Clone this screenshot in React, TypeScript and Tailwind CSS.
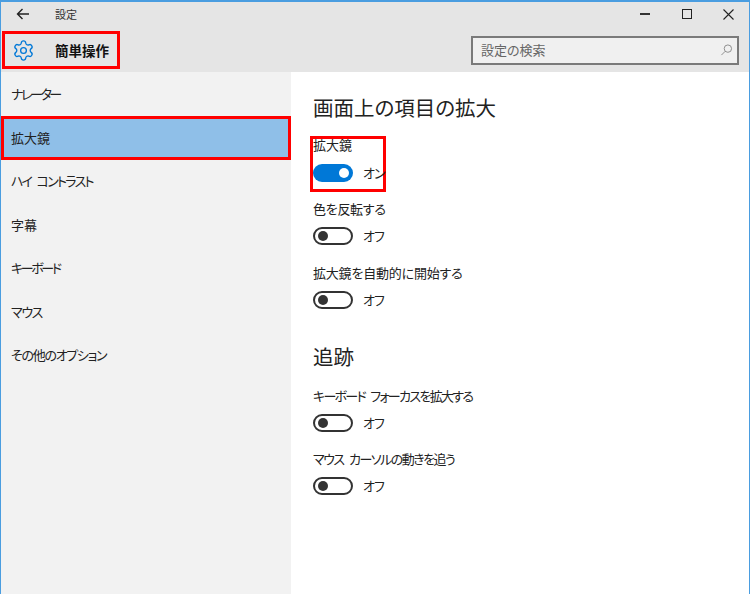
import { Settings } from "lucide-react";

const font = { fontFamily: '"Noto Sans CJK JP", "Noto Sans", sans-serif' };

const navItems = [
  { label: "ナレーター", tracking: "tracking-[-2.4px]" },
  { label: "拡大鏡", tracking: "", active: true },
  { label: "ハイ コントラスト", tracking: "tracking-[-1.7px] [word-spacing:4px]" },
  { label: "字幕", tracking: "" },
  { label: "キーボード", tracking: "tracking-[-2.4px]" },
  { label: "マウス", tracking: "tracking-[-1.3px]" },
  { label: "その他のオプション", tracking: "tracking-[-1.3px]" },
];

function Toggle({ on, className = "" }: { on?: boolean; className?: string }) {
  return (
    <div className={`flex items-center gap-[10px] ${className}`}>
      {on ? (
        <div className="flex h-[18px] w-[40px] shrink-0 items-center justify-end rounded-full bg-[#0078d7] pr-[4px]">
          <div className="h-[10px] w-[10px] rounded-full bg-white" />
        </div>
      ) : (
        <div className="flex h-[18px] w-[40px] shrink-0 items-center rounded-full border-2 border-[#333] pl-[3px]">
          <div className="h-[10px] w-[10px] rounded-full bg-[#333]" />
        </div>
      )}
      <span className="whitespace-nowrap text-[13px] leading-[18px] tracking-[-1px] text-[#222]">{on ? "オン" : "オフ"}</span>
    </div>
  );
}

function Field({ label, tracking = "", className = "" }: { label: string; tracking?: string; className?: string }) {
  return (
    <div className={className}>
      <div className={`text-[13px] leading-[18px] text-[#222] ${tracking}`}>{label}</div>
      <Toggle className="mt-[9px]" />
    </div>
  );
}

export default function App() {
  return (
    <div style={font} className='flex h-[594px] w-[750px] flex-col overflow-hidden border border-t-2 border-b-0 border-[#4a9de0] bg-white [font-feature-settings:"palt"]'>
      <div className="flex h-[70px] shrink-0 flex-col bg-[#e5e5e5]">
        <div className="flex h-[24px] shrink-0 items-center">
          <svg width="14" height="12" viewBox="0 0 14 12" className="ml-[15px]" fill="none" stroke="#222" strokeWidth="1.4">
            <path d="M13 6H1.5M6.5 1 1.5 6l5 5" />
          </svg>
          <span className="ml-[25px] text-[11px] text-[#333]">設定</span>
          <div className="ml-auto flex items-center">
            <div className="mr-[32px] h-[1.5px] w-[10px] bg-[#333]" />
            <div className="mr-[31px] h-[10px] w-[10px] border border-[#222]" />
            <svg width="11" height="11" viewBox="0 0 11 11" className="mr-[15px]" stroke="#222" strokeWidth="1.1">
              <path d="M.5.5l10 10M10.5.5l-10 10" />
            </svg>
          </div>
        </div>
        <div className="flex flex-1 items-start justify-between">
          <div className="ml-[1px] mt-[5px] flex h-[38px] w-[118px] items-center border-[3px] border-[#f00] pl-[7px]">
            <Settings size={23} strokeWidth={1.4} className="shrink-0 text-[#0078d7]" />
            <span className="ml-[20px] whitespace-nowrap text-[13.5px] font-bold text-[#111]">簡単操作</span>
          </div>
          <div className="mr-[10px] mt-[10px] flex h-[29px] w-[268px] items-center justify-between border-2 border-[#7a7a7a] bg-[#f0f0f0] pb-[1px] pl-[8px] pr-[4px]">
            <span className="text-[13px] text-[#666]">設定の検索</span>
            <svg width="13" height="12" viewBox="0 0 13 13" fill="none" stroke="#888" strokeWidth="1">
              <circle cx="8" cy="5" r="4" />
              <path d="M5 8l-4 4" />
            </svg>
          </div>
        </div>
      </div>
      <div className="flex flex-1">
        <nav className="w-[290px] shrink-0 bg-[#f2f2f2]">
          {navItems.map((item) =>
            item.active ? (
              <div key={item.label} className="flex h-[44px] items-center border-[3px] border-[#f00] bg-[#8fbfe8] pl-[7px] text-[13px] text-[#222]">
                {item.label}
              </div>
            ) : (
              <div key={item.label} className={`flex h-[43.5px] items-center pb-[1px] pl-[10px] text-[13px] text-[#222] ${item.tracking}`}>
                {item.label}
              </div>
            ),
          )}
        </nav>
        <main className="flex-1 pl-[22px] pt-[20px]">
          <h2 className="text-[20.5px] leading-[30px] text-[#222]">画面上の項目の拡大</h2>
          <div className="ml-[-3px] mt-[14px] h-[56px] w-[76px] border-[3px] border-[#f00]">
            <div className="text-[13px] leading-[12px] text-[#222]">拡大鏡</div>
            <Toggle on className="mt-[13px]" />
          </div>
          <Field label="色を反転する" tracking="tracking-[-0.3px]" className="mt-[8px]" />
          <Field label="拡大鏡を自動的に開始する" tracking="tracking-[-0.2px]" className="mt-[19px]" />
          <h2 className="mt-[32px] text-[20.5px] leading-[30px] text-[#222]">追跡</h2>
          <Field label="キーボード フォーカスを拡大する" tracking="tracking-[-1.7px] [word-spacing:4px]" className="mt-[16px]" />
          <Field label="マウス カーソルの動きを追う" tracking="tracking-[-1.5px] [word-spacing:4px]" className="mt-[18px]" />
        </main>
      </div>
    </div>
  );
}
